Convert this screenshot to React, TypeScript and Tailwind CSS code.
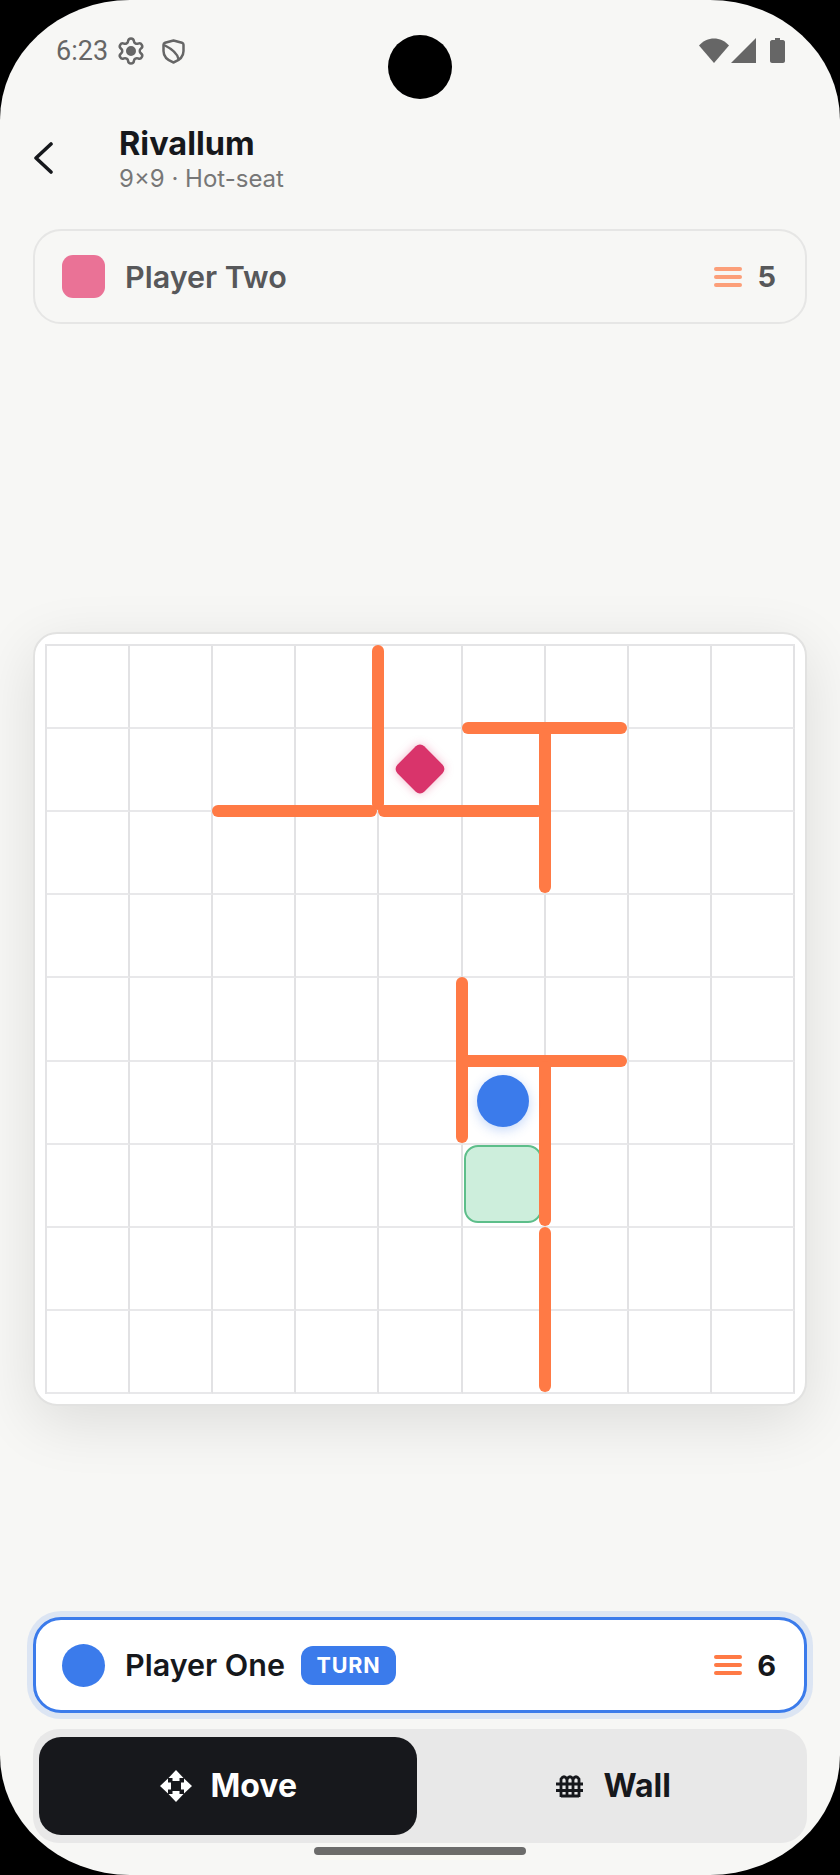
import { Settings } from "lucide-react"

const STEP = 83.11

// board walls, in grid line units
const walls = [
  { x: 4, y: 0, dir: "v" },
  { x: 2, y: 2, dir: "h" },
  { x: 4, y: 2, dir: "h" },
  { x: 5, y: 1, dir: "h" },
  { x: 6, y: 1, dir: "v" },
  { x: 5, y: 4, dir: "v" },
  { x: 5, y: 5, dir: "h" },
  { x: 6, y: 5, dir: "v" },
  { x: 6, y: 7, dir: "v" },
]

const cells = Array.from({ length: 81 }, (_, i) => i)

function WallCount({ count, dim }: { count: number; dim?: boolean }) {
  return (
    <div className="flex items-center gap-[15px]">
      <div className={`flex flex-col gap-[4px] ${dim ? "opacity-70" : ""}`}>
        <div className="w-[28px] h-[4px] rounded-full bg-[#FF7A45]" />
        <div className="w-[28px] h-[4px] rounded-full bg-[#FF7A45]" />
        <div className="w-[28px] h-[4px] rounded-full bg-[#FF7A45]" />
      </div>
      <span className={`text-[29px] font-bold leading-none ${dim ? "text-[#57585a]" : "text-[#16181c]"}`}>{count}</span>
    </div>
  )
}

function StatusBar() {
  return (
    <div className="relative h-[100px] shrink-0 pl-[56px] pr-[55px] pt-[35px] flex justify-between items-start text-[#666666]">
      <div className="flex items-center">
        <span className="text-[27px] leading-[32px] font-['Roboto',sans-serif]">6:23</span>
        <span className="relative ml-[8px] w-[30px] h-[30px]">
          <Settings size={30} strokeWidth={2} />
          <span className="absolute left-[11px] top-[11px] w-[8px] h-[8px] rounded-full bg-[#666666]" />
        </span>
        <svg className="ml-[16px]" width="23" height="25" viewBox="0 0 23 25" fill="none" stroke="#666666" strokeWidth="2.5" strokeLinejoin="round" strokeLinecap="round">
          <path d="M11.5 1.5 L20 3.8 C21 4.1 21.5 4.8 21.5 5.8 V12 C21.5 17.5 17 21.5 11.5 23.5 C6 21.5 1.5 17.5 1.5 12 V5.8 C1.5 4.8 2 4.1 3 3.8 Z" />
          <path d="M3 6.5 C8 9 15 13 16.5 20" />
        </svg>
      </div>
      <div className="flex items-start pt-[3px]">
        <svg width="30" height="25" viewBox="0 0 30 25" fill="#666666">
          <path d="M0 7.5 C8 -2 22 -2 30 7.5 L15 25 Z" />
        </svg>
        <svg className="ml-[2px]" width="25" height="25" viewBox="0 0 25 25" fill="#666666">
          <path d="M25 0 V25 H0 Z" />
        </svg>
        <svg className="ml-[14px]" width="15" height="25" viewBox="0 0 15 25" fill="#666666">
          <path d="M5 0 H10 V2 H13 C14 2 15 3 15 4 V23 C15 24 14 25 13 25 H2 C1 25 0 24 0 23 V4 C0 3 1 2 2 2 H5 Z" />
        </svg>
      </div>
      <div className="absolute left-[388px] top-[35px] w-[64px] h-[64px] rounded-full bg-black" />
    </div>
  )
}

function Board() {
  return (
    <div className="w-[774px] h-[774px] mx-auto box-border rounded-[24px] border-2 border-[#e2e2e1] bg-white p-[10px] shadow-[0_16px_60px_rgba(0,0,0,0.11)]">
      <div className="relative w-[750px] h-[750px] grid grid-cols-9 grid-rows-9 border-t-2 border-l-2 border-[#e4e4e6]">
        {cells.map((c) => (
          <div key={c} className="border-r-2 border-b-2 border-r-[#e2e2e4] border-b-[#e8e8ea]" />
        ))}

        <div className="absolute left-[417px] top-[499px] w-[78px] h-[78px] box-border rounded-[14px] border-2 border-[#5dbe8a] bg-[#cdeedc]" />

        {walls.map((w, i) => {
          const x = w.x * STEP - 1
          const y = w.y * STEP - 1
          return (
            <div
              key={i}
              className="absolute rounded-full bg-[#ff7a45]"
              style={
                w.dir === "h"
                  ? { left: x, top: y - 6, width: STEP * 2 - 1, height: 12 }
                  : { left: x - 6, top: y, width: 12, height: STEP * 2 - 1 }
              }
            />
          )
        })}

        <div className="absolute left-[354px] top-[104px] w-[38px] h-[38px] rotate-45 rounded-[6px] bg-[#d9346b] shadow-[0_0_10px_rgba(217,52,107,0.35)]" />
        <div className="absolute left-[430px] top-[429px] w-[52px] h-[52px] rounded-full bg-[#3b7beb] shadow-[0_3px_12px_rgba(59,123,235,0.3)]" />
      </div>
    </div>
  )
}

export default function App() {
  return (
    <div className="w-[840px] h-[1875px] bg-black font-['Inter',sans-serif] overflow-hidden">
      <div className="w-full h-full flex flex-col bg-[#f7f7f5] rounded-[130px/120px] overflow-hidden">
        <StatusBar />

        <div className="h-[129px] shrink-0 flex items-start pl-[33px]">
          <svg className="mt-[42px]" width="20" height="32" viewBox="0 0 20 32" fill="none" stroke="#16181c" strokeWidth="3.6" strokeLinecap="round" strokeLinejoin="round">
            <path d="M18 2 L3 16 L18 30" />
          </svg>
          <div className="ml-[66px] mt-[24px]">
            <div className="text-[32.5px] leading-[40px] font-bold text-[#16181c]">Rivallum</div>
            <div className="text-[24px] leading-[30px] text-[#777777]">9×9 · Hot-seat</div>
          </div>
        </div>

        <div className="mx-[33px] h-[95px] shrink-0 box-border rounded-[28px] border-2 border-[#e6e6e5] flex items-center justify-between pl-[27px] pr-[29px]">
          <div className="flex items-center gap-[20px]">
            <div className="w-[43px] h-[43px] rounded-[11px] bg-[#ea7296]" />
            <span className="text-[30.5px] font-semibold text-[#57585a]">Player Two</span>
          </div>
          <WallCount count={5} dim />
        </div>

        <div className="mt-[308px]">
          <Board />
        </div>

        <div className="mt-[211px] mx-[33px] h-[96px] shrink-0 box-border rounded-[28px] border-[3px] border-[#3b7beb] bg-white shadow-[0_0_0_6px_rgba(59,123,235,0.14)] flex items-center justify-between pl-[26px] pr-[28px]">
          <div className="flex items-center">
            <div className="w-[43px] h-[43px] rounded-full bg-[#3b7beb]" />
            <span className="ml-[20px] text-[30.5px] font-semibold text-[#16181c]">Player One</span>
            <span className="ml-[16px] h-[39px] w-[95px] rounded-[12px] bg-[#3b7beb] flex items-center justify-center text-[21.5px] font-bold tracking-[0.8px] text-white">TURN</span>
          </div>
          <WallCount count={6} />
        </div>

        <div className="mt-[16px] mx-[33px] h-[114px] shrink-0 box-border rounded-[26px] bg-[#e8e8e8] px-[6px] py-[8px] flex gap-[9px]">
          <div className="flex-1 rounded-[22px] bg-[#17181c] flex items-center justify-center gap-[18px] pl-[2px] text-white">
            <svg width="32" height="32" viewBox="0 0 32 32" fill="currentColor">
              <path d="M16 0 L23.5 8 H19.5 V11 H12.5 V8 H8.5 Z" />
              <path d="M16 32 L23.5 24 H19.5 V21 H12.5 V24 H8.5 Z" />
              <path d="M0 16 L8 8.5 V12.5 H11 V19.5 H8 V23.5 Z" />
              <path d="M32 16 L24 8.5 V12.5 H21 V19.5 H24 V23.5 Z" />
            </svg>
            <span className="text-[32px] font-bold">Move</span>
          </div>
          <div className="flex-1 flex items-center justify-center gap-[21px] text-[#16181c]">
            <svg width="27" height="24" viewBox="0 0 27 24" fill="none" stroke="currentColor" strokeWidth="2.8">
              <path d="M5 23 V5 Q8 0.5 11 5 Q14 0.5 17 5 Q20 0.5 23 5 V23" />
              <path d="M11 5 V23 M17 5 V23 M5 22 H23" />
              <path d="M0 10 H27 M0 16.5 H27" />
            </svg>
            <span className="text-[32px] font-bold">Wall</span>
          </div>
        </div>

        <div className="mt-[4px] mx-auto w-[212px] h-[8px] shrink-0 rounded-full bg-[#6b6b6b]" />
      </div>
    </div>
  )
}
